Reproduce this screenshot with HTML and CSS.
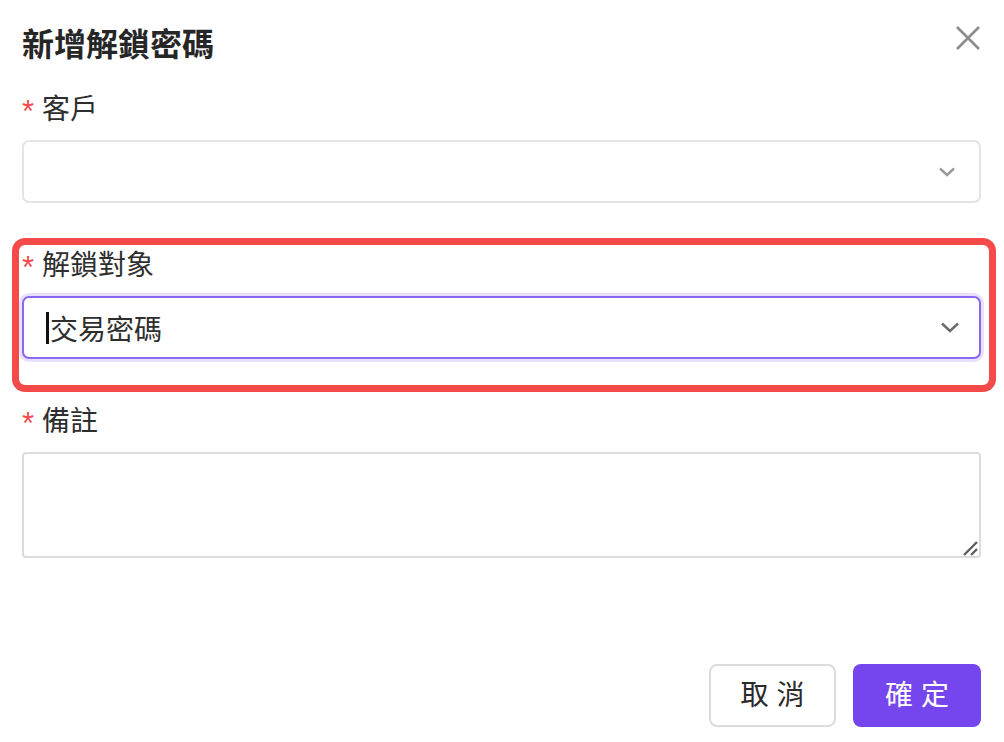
FILE: index.html
```html
<!DOCTYPE html>
<html lang="zh-Hant">
<head>
<meta charset="utf-8">
<title>新增解鎖密碼</title>
<link rel="stylesheet" href="styles.css">
</head>
<body>
<div class="dialog">
  <div class="header">
    <div class="title">新增解鎖密碼</div>
    <svg class="close" width="24" height="24" viewBox="0 0 24 24"><path d="M1 1 L23 23 M23 1 L1 23" stroke="#8c8c8c" stroke-width="2.6" fill="none"/></svg>
  </div>
  <div class="form">
    <div class="item">
      <div class="label"><span class="req">*</span>客戶</div>
      <div class="select">
        <span class="value"></span>
        <svg class="chev" width="18" height="10" viewBox="0 0 18 10"><path d="M2 1.5 L9 8 L16 1.5" stroke="#9a9a9a" stroke-width="2.4" fill="none"/></svg>
      </div>
    </div>
    <div class="item highlighted">
      <div class="label"><span class="req">*</span>解鎖對象</div>
      <div class="select focused">
        <span class="value"><span class="caret"></span>交易密碼</span>
        <svg class="chev" width="20" height="11" viewBox="0 0 20 11"><path d="M2 1.5 L10 9 L18 1.5" stroke="#6b6b6b" stroke-width="2.4" fill="none"/></svg>
      </div>
    </div>
    <div class="item">
      <div class="label"><span class="req">*</span>備註</div>
      <div class="textarea-wrap">
        <textarea class="textarea"></textarea>
        <svg class="grip" width="16" height="16" viewBox="0 0 16 16"><path d="M2 15 L15 2 M9 15 L15 9" stroke="#5e5e5e" stroke-width="2.4" fill="none"/></svg>
      </div>
    </div>
  </div>
  <div class="footer">
    <button class="btn btn-cancel">取 消</button>
    <button class="btn btn-primary">確 定</button>
  </div>
</div>
</body>
</html>
```

FILE: styles.css
```css
* { box-sizing: border-box; }
html, body { margin: 0; padding: 0; background: #ffffff; }
body {
  font-family: "Liberation Sans", "Noto Sans CJK TC", sans-serif;
  color: #2b2b2b;
}
.dialog {
  width: 1004px;
  height: 742px;
  padding: 22px 23px 0 22px;
}
.header {
  display: flex;
  justify-content: space-between;
  align-items: flex-start;
  height: 40px;
}
.title {
  font-family: "Noto Sans CJK TC", sans-serif;
  font-size: 32px;
  font-weight: 700;
  line-height: 40px;
  color: #262626;
}
.close {
  margin-top: 4px;
  margin-right: 1px;
  display: block;
}
.form {
  margin-top: 28px;
  display: flex;
  flex-direction: column;
  gap: 43px;
}
.item {
  position: relative;
  display: flex;
  flex-direction: column;
  gap: 10px;
}
.highlighted::after {
  content: "";
  position: absolute;
  top: -8px;
  left: -10px;
  right: -15px;
  bottom: -33px;
  border: 7px solid #f44a4a;
  border-radius: 13px;
  pointer-events: none;
}
.label {
  font-size: 28px;
  line-height: 40px;
  height: 40px;
  color: #2e2e2e;
}
.req {
  color: #f34b4d;
  font-family: "Liberation Sans", sans-serif;
  font-size: 31px;
  display: inline-block;
  width: 20px;
  vertical-align: -3px;
}
.select {
  height: 63px;
  border: 2px solid #e3e3e8;
  border-radius: 7px;
  display: flex;
  align-items: center;
  justify-content: space-between;
  padding: 0 23px 0 22px;
  background: #fff;
}
.select.focused {
  border-color: #8b66f0;
  box-shadow: 0 0 0 3px #e9e0fd;
  padding-right: 19px;
}
.value {
  display: flex;
  align-items: center;
  font-size: 28px;
  color: #2e2e2e;
}
.caret {
  display: inline-block;
  width: 3px;
  height: 32px;
  background: #111;
  margin-right: 1px;
}
.chev { display: block; }
.textarea-wrap {
  position: relative;
  height: 106px;
}
.textarea {
  display: block;
  width: 100%;
  height: 106px;
  border: 2px solid #dcdcdc;
  border-radius: 4px;
  resize: none;
  font-family: inherit;
  font-size: 24px;
  padding: 8px 12px;
  outline: none;
}
.grip {
  position: absolute;
  right: 3px;
  bottom: 2px;
  display: block;
}
.footer {
  margin-top: 106px;
  display: flex;
  justify-content: flex-end;
  gap: 17px;
}
.btn {
  height: 63px;
  border-radius: 8px;
  font-family: "Liberation Sans", "Noto Sans CJK TC", sans-serif;
  font-size: 28px;
  line-height: 1;
  padding: 0;
  cursor: pointer;
}
.btn-cancel {
  width: 127px;
  background: #fff;
  border: 2px solid #dcdcdc;
  color: #2b2b2b;
}
.btn-primary {
  width: 128px;
  background: #7545ee;
  border: 0;
  color: #ffffff;
}
```
